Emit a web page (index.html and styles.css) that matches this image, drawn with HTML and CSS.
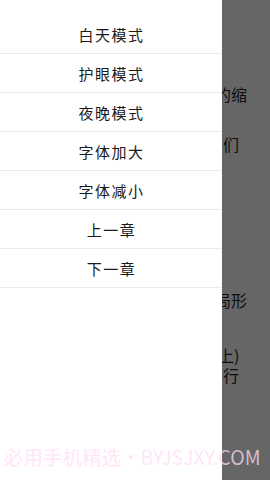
FILE: index.html
```html
<!DOCTYPE html>
<html lang="zh">
<head>
<meta charset="utf-8">
<link rel="stylesheet" href="styles.css">
</head>
<body>
<div class="screen">
  <nav class="drawer">
    <ul class="menu">
      <li class="item">白天模式</li>
      <li class="item">护眼模式</li>
      <li class="item">夜晚模式</li>
      <li class="item">字体加大</li>
      <li class="item">字体减小</li>
      <li class="item">上一章</li>
      <li class="item">下一章</li>
    </ul>
  </nav>
  <div class="backdrop">
    <div class="line l1">的缩</div>
    <div class="line l2">们</div>
    <div class="line l3">局形</div>
    <div class="line l4">上)</div>
    <div class="line l5">行</div>
  </div>
  <div class="watermark">必用手机精选・BYJSJXY.COM</div>
</div>
</body>
</html>
```
FILE: styles.css
```css
html, body {
  margin: 0;
  padding: 0;
  background: #ffffff;
}
.screen {
  position: relative;
  display: flex;
  width: 270px;
  height: 480px;
  overflow: hidden;
  font-family: "Noto Sans CJK SC", "Noto Sans", sans-serif;
}
.drawer {
  width: 222px;
  flex: none;
  background: #ffffff;
  padding-top: 15px;
  box-sizing: border-box;
}
.menu {
  list-style: none;
  margin: 0;
  padding: 0;
}
.item {
  height: 39px;
  line-height: 40px;
  border-bottom: 1px solid #ebebeb;
  box-sizing: border-box;
  text-align: center;
  font-size: 15px;
  letter-spacing: 1.5px;
  color: #1a1a1a;
  padding-left: 1px;
  overflow: hidden;
}
.backdrop {
  flex: 1;
  background: #666666;
  overflow: hidden;
  color: #0e0e0e;
  font-size: 16px;
}
.line {
  height: 20px;
  line-height: 20px;
  white-space: nowrap;
}
.l1 { margin-top: 84px; margin-left: -7px; }
.l2 { margin-top: 30px; margin-left: 1px; }
.l3 { margin-top: 136px; margin-left: -7px; }
.l4 { margin-top: 35px; margin-left: -4px; }
.l5 { margin-left: 1px; }
.watermark {
  position: absolute;
  left: 4px;
  top: 444px;
  font-size: 19.5px;
  line-height: 26px;
  white-space: nowrap;
  color: rgba(255, 220, 244, 0.74);
}
```
